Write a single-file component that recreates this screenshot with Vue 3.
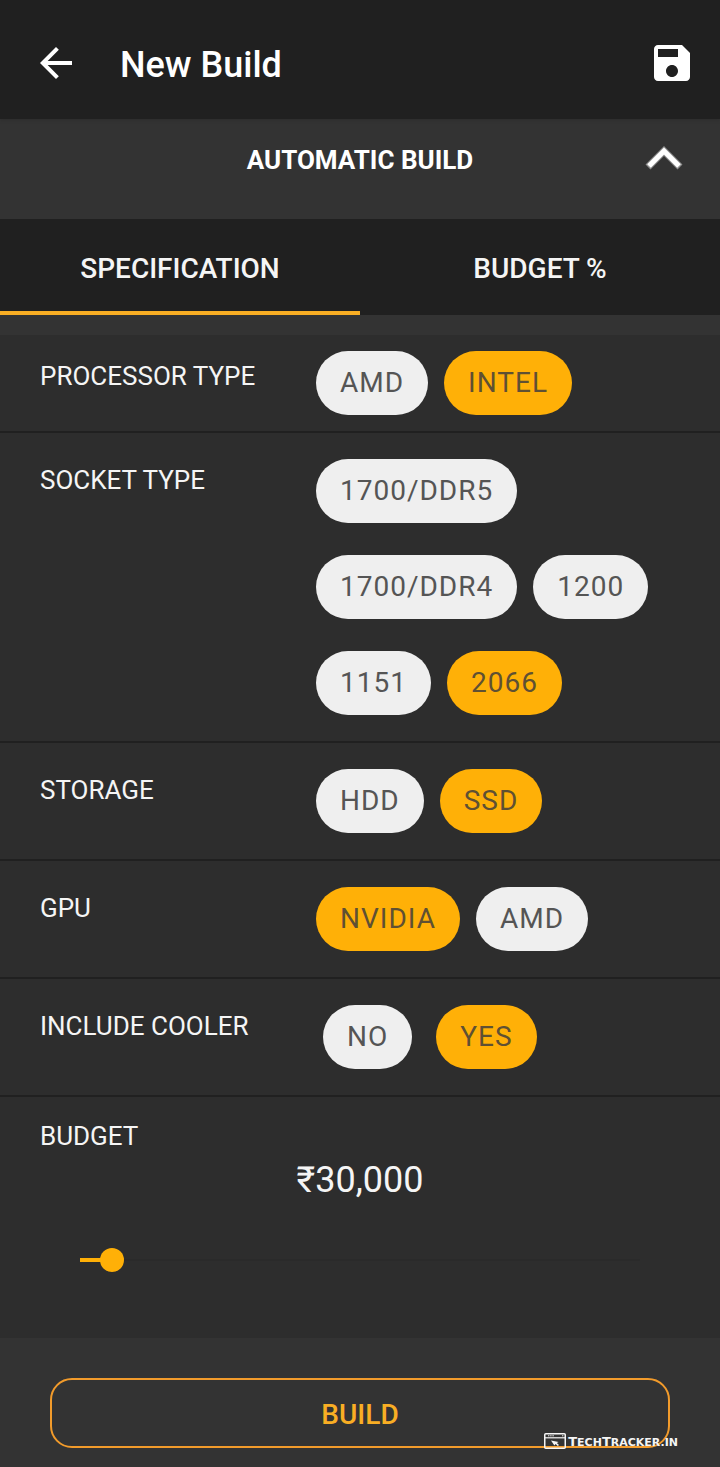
<script setup>
import { computed, reactive, ref } from 'vue'

const open = ref(true)
const activeTab = ref('SPECIFICATION')
const tabs = ['SPECIFICATION', 'BUDGET %']

const rows = reactive([
  { id: 'processor', label: 'PROCESSOR TYPE', options: ['AMD', 'INTEL'], selected: 'INTEL', variant: 'compact' },
  { id: 'socket', label: 'SOCKET TYPE', options: ['1700/DDR5', '1700/DDR4', '1200', '1151', '2066'], selected: '2066', variant: '' },
  { id: 'storage', label: 'STORAGE', options: ['HDD', 'SSD'], selected: 'SSD', variant: '' },
  { id: 'gpu', label: 'GPU', options: ['NVIDIA', 'AMD'], selected: 'NVIDIA', variant: '' },
  { id: 'cooler', label: 'INCLUDE COOLER', options: ['NO', 'YES'], selected: 'YES', variant: 'spaced' },
])

const min = 10000
const max = 360000
const budget = ref(30000)
const fraction = computed(() => (budget.value - min) / (max - min))
const budgetText = computed(() => '₹' + Number(budget.value).toLocaleString('en-IN'))
</script>

<template>
  <div class="screen">
    <header class="app-bar">
      <button class="icon-button" type="button" aria-label="Back">
        <svg viewBox="0 0 24 24" width="48" height="48" fill="currentColor" aria-hidden="true">
          <path d="M20 11H7.83l5.59-5.59L12 4l-8 8 8 8 1.41-1.41L7.83 13H20v-2z" />
        </svg>
      </button>
      <h1 class="title">New Build</h1>
      <button class="icon-button" type="button" aria-label="Save">
        <svg viewBox="0 0 24 24" width="48" height="48" fill="currentColor" aria-hidden="true">
          <path d="M17 3H5c-1.11 0-2 .9-2 2v14c0 1.1.89 2 2 2h14c1.1 0 2-.9 2-2V7l-4-4zm-5 16c-1.66 0-3-1.34-3-3s1.34-3 3-3 3 1.34 3 3-1.34 3-3 3zm3-10H5V5h10v4z" />
        </svg>
      </button>
    </header>

    <button class="accordion" type="button" :aria-expanded="open" @click="open = !open">
      <span class="accordion-title">AUTOMATIC BUILD</span>
      <svg class="chevron" viewBox="0 0 40 40" width="40" height="40" aria-hidden="true">
        <path d="M4 27L20 11L36 27" fill="none" stroke="currentColor" stroke-opacity="0.45" stroke-width="7" />
        <path d="M5 26L20 11L35 26" fill="none" stroke="currentColor" stroke-width="5" />
      </svg>
    </button>

    <main v-show="open" class="content">
      <div class="tabs" role="tablist">
        <button
          v-for="tab in tabs"
          :key="tab"
          class="tab"
          :class="{ active: tab === activeTab }"
          type="button"
          role="tab"
          :aria-selected="tab === activeTab"
          @click="activeTab = tab"
        >{{ tab }}</button>
      </div>

      <section class="panel">
        <div
          v-for="row in rows"
          :key="row.id"
          class="row"
          :class="row.variant"
          role="group"
          :aria-labelledby="row.id"
        >
          <span :id="row.id" class="label">{{ row.label }}</span>
          <div class="chips">
            <button
              v-for="option in row.options"
              :key="option"
              class="chip"
              :class="{ selected: option === row.selected }"
              type="button"
              :aria-pressed="option === row.selected"
              @click="row.selected = option"
            >{{ option }}</button>
          </div>
        </div>

        <div class="budget">
          <label class="label" for="budget">BUDGET</label>
          <output class="amount" for="budget">{{ budgetText }}</output>
          <input
            id="budget"
            v-model.number="budget"
            class="slider"
            type="range"
            :min="min"
            :max="max"
            step="1000"
            :style="{ '--fraction': fraction }"
          />
        </div>
      </section>
    </main>

    <footer class="footer">
      <button class="build" type="button">BUILD</button>
      <div class="brand">
        <svg viewBox="0 0 22 16" width="22" height="16" fill="none" stroke="currentColor" aria-hidden="true">
          <rect x="0.75" y="0.75" width="20.5" height="14.5" rx="1" stroke-width="1.5" />
          <path d="M1 4.8H21" stroke-width="1.2" />
          <path d="M4 2.8H10M18 2.8H20" stroke-width="1" stroke-dasharray="1.4 0.8" />
          <path d="M7 7.6L14.6 9L12.8 10L15 12L13.8 13L11.6 11L10.4 12.6Z" fill="currentColor" stroke="none" />
        </svg>
        <span class="brand-name"><span class="cap">T</span>ech<span class="cap">T</span>racker.in</span>
      </div>
    </footer>
  </div>
</template>

<style>
body {
  margin: 0;
  background: #333333;
}
</style>

<style scoped>
.screen {
  display: flex;
  flex-direction: column;
  min-height: 100vh;
  background: #333333;
  color: #ffffff;
  font-family: Roboto, "Noto Sans", sans-serif;
}

button {
  margin: 0;
  border: 0;
  padding: 0;
  background: none;
  color: inherit;
  font: inherit;
  cursor: pointer;
}

svg {
  display: block;
}

.app-bar {
  position: relative;
  display: flex;
  align-items: center;
  gap: 40px;
  padding: 39px 24px 32px 32px;
  background: #202020;
  box-shadow: 0 1px 4px rgba(0, 0, 0, 0.15);
}

.title {
  flex: 1;
  margin: 0;
  padding-top: 4px;
  font-size: 36px;
  line-height: 44px;
  font-weight: 500;
}

.accordion {
  display: grid;
  grid-template-columns: 40px 1fr 40px;
  align-items: center;
  padding: 21px 36px 39px;
}

.accordion-title {
  grid-column: 2;
  font-size: 26px;
  line-height: 40px;
  font-weight: 700;
}

.tabs {
  display: flex;
  background: #202020;
}

.tab {
  flex: 1;
  box-sizing: border-box;
  height: 96px;
  padding-top: 6px;
  border-bottom: 4px solid transparent;
  color: #f5f5f5;
  font-size: 28px;
  font-weight: 500;
}

.tab.active {
  border-bottom-color: #f9ae24;
}

.panel {
  margin-top: 20px;
  background: #2d2d2d;
}

.row {
  display: grid;
  grid-template-columns: 276px 1fr;
  align-items: start;
  padding: 26px 40px;
  border-bottom: 2px solid #202020;
}

.row.compact {
  padding-top: 16px;
  padding-bottom: 16px;
}

.label {
  color: #f5f5f5;
  font-size: 26px;
  line-height: 32px;
}

.row .label {
  padding-top: 5px;
}

.row.compact .label {
  padding-top: 9px;
}

.chips {
  display: flex;
  flex-wrap: wrap;
  gap: 32px 16px;
}

.spaced .chips {
  column-gap: 24px;
  padding-left: 7px;
}

.chip {
  height: 64px;
  padding: 0 24px 2px;
  border-radius: 32px;
  background: #efefef;
  color: #555555;
  font-size: 28px;
  letter-spacing: 1px;
}

.chip.selected {
  background: #ffb007;
  color: #5f5033;
}

.budget {
  display: flex;
  flex-direction: column;
  padding: 23px 40px 66px;
}

.amount {
  align-self: center;
  color: #f5f5f5;
  font-size: 36px;
  line-height: 56px;
}

.slider {
  appearance: none;
  height: 24px;
  margin: 40px 28px 0;
  background:
    linear-gradient(#ffb007, #ffb007) 12px center / calc((100% - 24px) * var(--fraction)) 4px no-repeat,
    linear-gradient(#2a2a2a, #2a2a2a) center / calc(100% - 24px) 2px no-repeat;
  cursor: pointer;
}

.slider::-webkit-slider-thumb {
  appearance: none;
  width: 24px;
  height: 24px;
  border: 0;
  border-radius: 50%;
  background: #ffb007;
}

.footer {
  position: relative;
  display: flex;
  padding: 40px 50px 19px;
}

.build {
  flex: 1;
  box-sizing: border-box;
  height: 70px;
  padding-top: 2px;
  border: 2px solid #f29b2b;
  border-radius: 22px;
  color: #f9ae24;
  font-size: 28px;
  font-weight: 500;
}

.brand {
  position: absolute;
  right: 42px;
  bottom: 16px;
  display: flex;
  align-items: center;
  gap: 2px;
  color: #f5f5f5;
  pointer-events: none;
}

.brand-name {
  padding-top: 3px;
  font-family: "DejaVu Sans", sans-serif;
  font-size: 11px;
  line-height: 16px;
  font-weight: 700;
  text-transform: uppercase;
}

.cap {
  font-size: 13px;
}
</style>
